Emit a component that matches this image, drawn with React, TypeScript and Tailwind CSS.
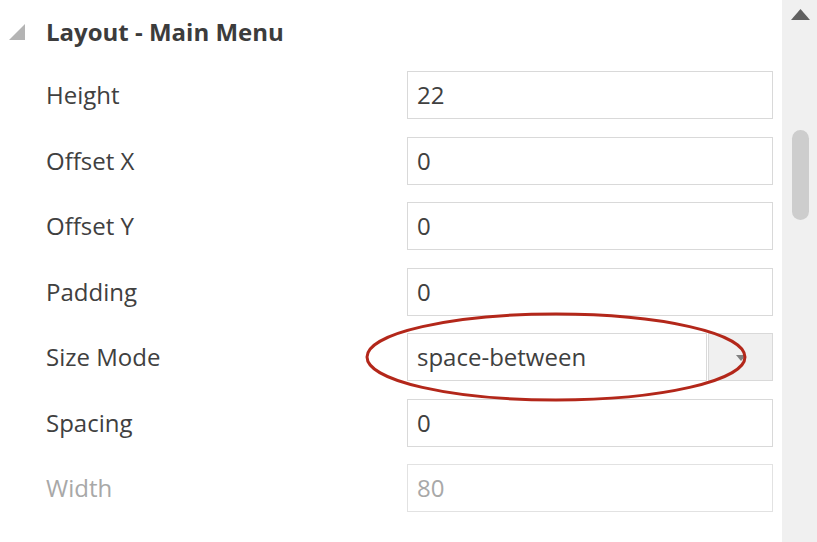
import React from 'react';

type Row = { label: string; value: string; kind?: 'select'; disabled?: boolean };

const rows: Row[] = [
  { label: 'Height', value: '22' },
  { label: 'Offset X', value: '0' },
  { label: 'Offset Y', value: '0' },
  { label: 'Padding', value: '0' },
  { label: 'Size Mode', value: 'space-between', kind: 'select' },
  { label: 'Spacing', value: '0' },
  { label: 'Width', value: '80', disabled: true },
];

function PropertyRow({ row }: { row: Row }) {
  const labelColor = row.disabled ? 'text-[#a8a8a8]' : 'text-[#404040]';
  return (
    <div className="flex items-center h-12">
      <div className={`w-[407px] shrink-0 pl-[46px] ${labelColor}`}>{row.label}</div>
      {row.kind === 'select' ? (
        <div className="relative flex w-[366px] h-12">
          <div className="flex-1 flex items-center pl-[9px] border border-[#d9d9d9] bg-white text-[#404040]">
            {row.value}
          </div>
          <div className="w-[65px] ml-[1px] flex items-center justify-center border border-[#d9d9d9] bg-[#f0f0f0]">
            <svg width="10" height="6" viewBox="0 0 10 6" className="mt-[2px]">
              <polygon points="0,0 10,0 5,6" fill="#808080" />
            </svg>
          </div>
          {/* red annotation ring */}
          <svg
            className="absolute left-[-43px] top-[-22px] pointer-events-none"
            width="386"
            height="94"
            viewBox="0 0 386 94"
          >
            <ellipse cx="192" cy="46" rx="189" ry="43" fill="none" stroke="#b3271a" strokeWidth="3" />
          </svg>
        </div>
      ) : (
        <div
          className={`w-[366px] h-12 flex items-center pl-[9px] border bg-white ${
            row.disabled ? 'border-[#e2e2e2] text-[#a8a8a8]' : 'border-[#d9d9d9] text-[#404040]'
          }`}
        >
          {row.value}
        </div>
      )}
    </div>
  );
}

export default function App() {
  return (
    <div
      className="flex w-[817px] h-[542px] bg-white overflow-hidden text-[24px]"
      style={{ fontFamily: '"Open Sans", "Noto Sans", sans-serif' }}
    >
      {/* Property panel */}
      <div className="flex-1 flex flex-col">
        <div className="flex items-center h-[64px] pb-[1px]">
          <div className="w-[46px] flex justify-start pl-[9px]">
            <svg width="16" height="16" viewBox="0 0 16 16">
              <polygon points="16,0 16,16 0,16" fill="#b4b4b4" />
            </svg>
          </div>
          <div className="font-bold text-[#3c3c3c]">Layout - Main Menu</div>
        </div>
        <div className="flex flex-col gap-[17.5px] pt-[7px]">
          {rows.map((r) => (
            <PropertyRow key={r.label} row={r} />
          ))}
        </div>
      </div>

      {/* Scrollbar */}
      <div className="w-[35px] bg-[#f0f0f0] flex flex-col items-center">
        <svg width="19" height="11" viewBox="0 0 19 11" className="mt-[9px] ml-[1px]">
          <polygon points="9.5,0 19,11 0,11" fill="#606060" />
        </svg>
        <div className="mt-[110px] w-[17px] h-[90px] ml-[1px] rounded-full bg-[#cdcdcd]" />
      </div>
    </div>
  );
}
